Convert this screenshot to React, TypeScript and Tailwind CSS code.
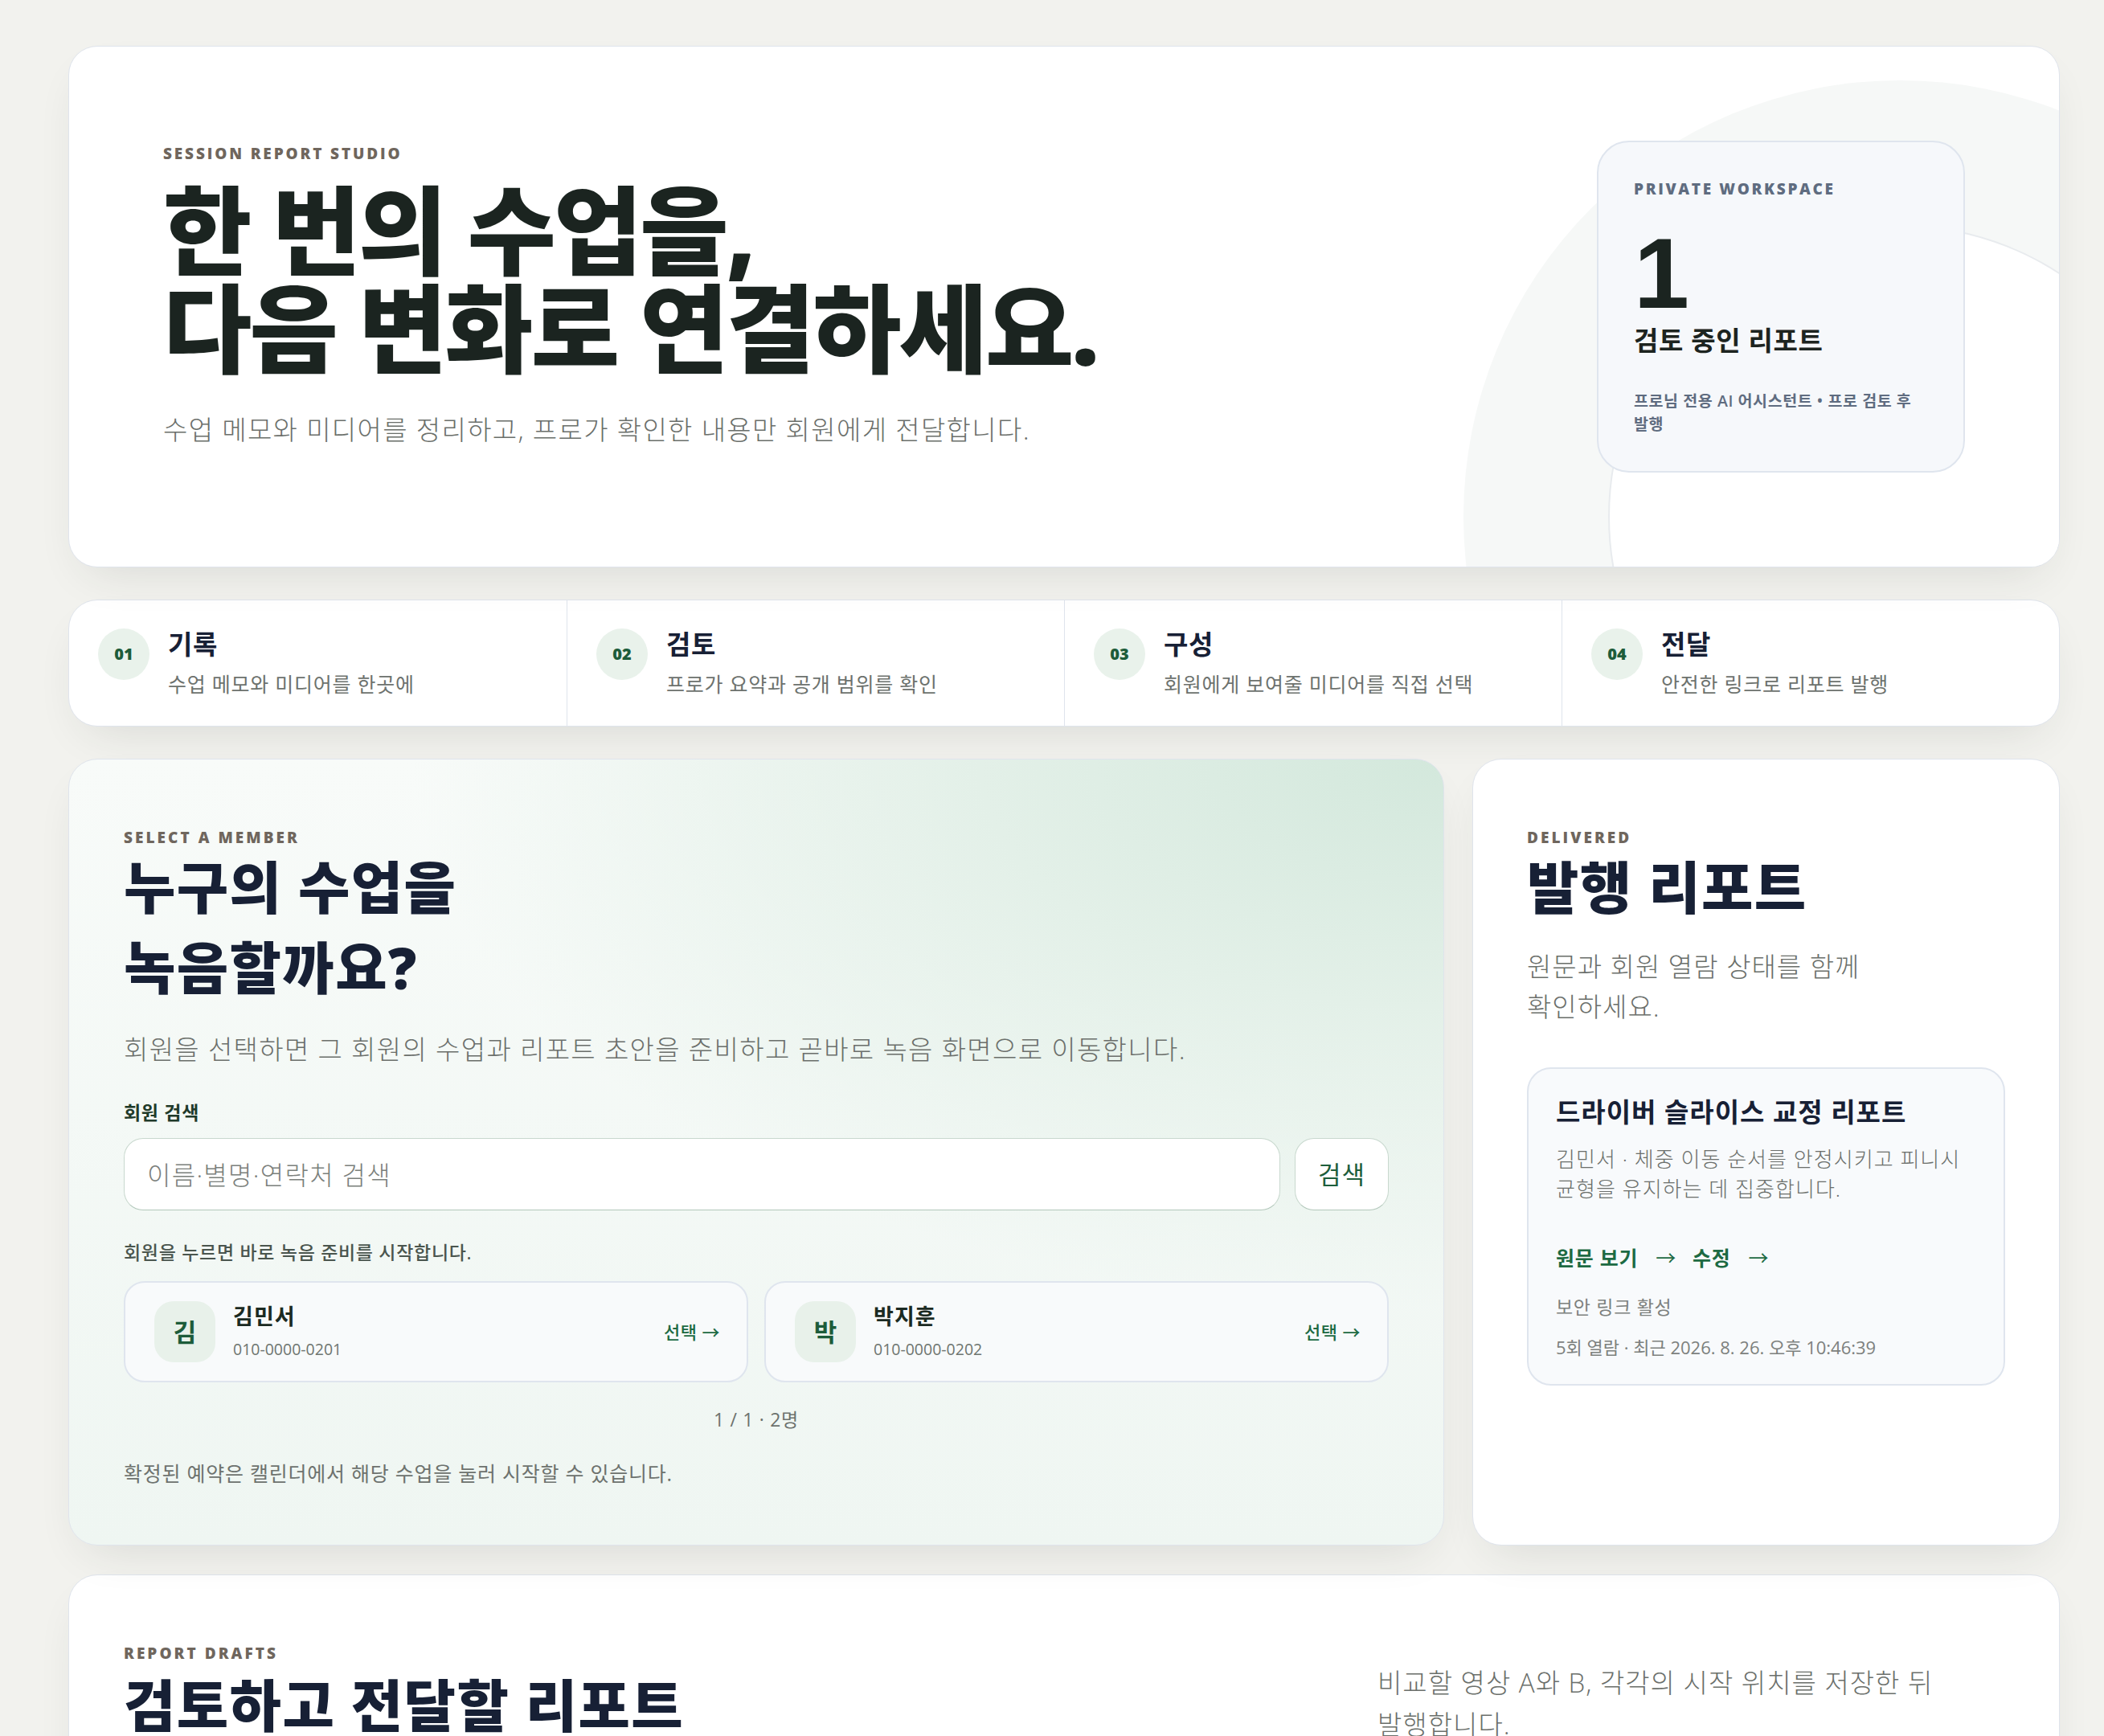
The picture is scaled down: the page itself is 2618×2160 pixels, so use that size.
import { type ReactNode } from 'react'

const steps = [
  { n: '01', title: '기록', desc: '수업 메모와 미디어를 한곳에' },
  { n: '02', title: '검토', desc: '프로가 요약과 공개 범위를 확인' },
  { n: '03', title: '구성', desc: '회원에게 보여줄 미디어를 직접 선택' },
  { n: '04', title: '전달', desc: '안전한 링크로 리포트 발행' },
]

const members = [
  { initial: '김', name: '김민서', phone: '010-0000-0201' },
  { initial: '박', name: '박지훈', phone: '010-0000-0202' },
]

function Eyebrow({ children, className = '' }: { children: ReactNode; className?: string }): JSX.Element {
  return (
    <p className={`text-[19px] font-extrabold uppercase leading-[24px] tracking-[0.16em] text-[#6f665d] ${className}`}>
      {children}
    </p>
  )
}

const card = 'rounded-[36px] border border-[#dfe4ec] shadow-[0_24px_60px_-24px_rgba(40,52,45,0.14)]'

export default function App(): JSX.Element {
  return (
    <div className="min-h-screen break-keep bg-[#f2f2ee] pl-[85px] pr-[55px] pt-[57px] font-['Open_Sans','Noto_Sans_CJK_KR',sans-serif] text-[#172035]">
      {/* 상단 히어로 */}
      <section className={`relative overflow-hidden bg-white ${card}`}>
        <div className="pointer-events-none absolute left-[1735px] top-[42px] h-[1086px] w-[1086px] rounded-full bg-[#f6f8f7]" />
        <div className="pointer-events-none absolute left-[1915px] top-[222px] h-[726px] w-[726px] rounded-full border-2 border-[#e8ebee] bg-white" />
        <div className="relative flex items-center justify-between px-[117px] py-[117px]">
          <div className="pb-[28px]">
            <p className="text-[19px] font-extrabold uppercase leading-[28px] tracking-[0.15em] text-[#6f665d]">
              Session Report Studio
            </p>
            <h1 className="mt-[21px] text-[120px] font-black leading-[122px] tracking-[-0.025em] text-[#1b2420]">
              한 번의 수업을,
              <br />
              다음 변화로 연결하세요.
            </h1>
            <p className="mt-[41px] text-[33px] font-light leading-[48px] tracking-[0.04em] text-[#6b6f6b]">
              수업 메모와 미디어를 정리하고, 프로가 확인한 내용만 회원에게 전달합니다.
            </p>
          </div>

          <div className="w-[458px] rounded-[40px] border-2 border-[#dfe5ee] bg-[#f6f8fb] px-[44px] pb-[44px] pt-[44px]">
            <p className="text-[19px] font-extrabold uppercase leading-[28px] tracking-[0.14em] text-[#5f6c80]">
              Private Workspace
            </p>
            <p className="mt-[29px] font-['Liberation_Sans',Arial,sans-serif] text-[124px] font-bold leading-none text-[#1b2420]">
              1
            </p>
            <p className="text-[33px] font-bold leading-[44px] tracking-[0.02em] text-[#1d2420]">검토 중인 리포트</p>
            <p className="mt-[38px] text-[19.5px] font-semibold leading-[29px] tracking-[0.03em] text-[#5f6c80]">
              프로님 전용 AI 어시스턴트 • 프로 검토 후 발행
            </p>
          </div>
        </div>
      </section>

      {/* 진행 단계 */}
      <section className={`mt-[40px] grid grid-cols-4 overflow-hidden bg-white ${card} rounded-[30px]`}>
        {steps.map((s, i) => (
          <div
            key={s.n}
            className={`flex items-start gap-[23px] px-[36px] pb-[35px] pt-[35px] ${i > 0 ? 'border-l border-[#dfe4ec]' : ''}`}
          >
            <span className="flex h-[64px] w-[64px] shrink-0 items-center justify-center rounded-full bg-[#e9f2eb] text-[20px] font-extrabold text-[#1d5c3a]">
              {s.n}
            </span>
            <div>
              <p className="text-[33px] font-bold leading-[40px] tracking-[0.02em] text-[#172035]">{s.title}</p>
              <p className="mt-[12px] text-[25px] leading-[34px] tracking-[0.03em] text-[#6d726e]">{s.desc}</p>
            </div>
          </div>
        ))}
      </section>

      {/* 회원 선택 + 발행 리포트 */}
      <div className="mt-[40px] grid grid-cols-[minmax(0,1fr)_731px] gap-[35px]">
        <section
          className={`${card} bg-[radial-gradient(ellipse_75%_70%_at_100%_0%,#d3e8dc_0%,#e3f0e8_45%,rgba(238,246,241,0)_100%),linear-gradient(180deg,#f8fbf9_0%,#eff6f2_100%)] px-[68px] pb-[72px] pt-[85px]`}
        >
          <Eyebrow>Select a member</Eyebrow>
          <h2 className="text-[70px] font-black leading-[100px] tracking-[0.02em] text-[#172035]">
            누구의 수업을
            <br />
            녹음할까요?
          </h2>
          <p className="mt-[28px] text-[33px] font-light leading-[48px] tracking-[0.04em] text-[#6b6f6b]">
            회원을 선택하면 그 회원의 수업과 리포트 초안을 준비하고 곧바로 녹음 화면으로 이동합니다.
          </p>

          <label className="mt-[39px] block text-[23px] font-bold leading-[30px] tracking-[0.03em] text-[#1f3a2a]">
            회원 검색
          </label>
          <div className="mt-[17px] flex gap-[18px]">
            <input
              placeholder="이름·별명·연락처 검색"
              className="h-[90px] min-w-0 flex-1 rounded-[24px] border border-[#c8d8ce] border-b-[#b2c7ba] bg-white px-[28px] text-[32px] font-light tracking-[0.04em] text-[#172035] outline-none placeholder:text-[#7b807c]"
            />
            <button
              type="button"
              className="h-[90px] w-[117px] rounded-[24px] border border-[#c8d8ce] border-b-[#b2c7ba] bg-white text-[31px] tracking-[0.03em] text-[#1d5e3c]"
            >
              검색
            </button>
          </div>

          <p className="mt-[37px] text-[23px] font-medium leading-[30px] tracking-[0.03em] text-[#4a554e]">
            회원을 누르면 바로 녹음 준비를 시작합니다.
          </p>

          <div className="mt-[21px] grid grid-cols-2 gap-[20px]">
            {members.map((m) => (
              <div
                key={m.name}
                className="flex items-center rounded-[26px] border-2 border-[#dfe5ee] bg-[#f8fafb] py-[23px] pl-[36px] pr-[33px]"
              >
                <span className="flex h-[76px] w-[76px] shrink-0 items-center justify-center rounded-[24px] bg-[#e8f1ea] text-[31px] font-bold text-[#1d5c3a]">
                  {m.initial}
                </span>
                <div className="ml-[22px] flex-1">
                  <p className="text-[27px] font-bold leading-[34px] tracking-[0.04em] text-[#1b2a22]">{m.name}</p>
                  <p className="mt-[10px] text-[19.5px] leading-[28px] text-[#6e7570]">{m.phone}</p>
                </div>
                <span className="text-[22px] font-medium tracking-[0.02em] text-[#1d6a43]">선택 →</span>
              </div>
            ))}
          </div>

          <p className="mt-[31px] text-center text-[23px] leading-[30px] tracking-[0.03em] text-[#6d726e]">1 / 1 · 2명</p>
          <p className="mt-[35px] text-[25px] leading-[34px] tracking-[0.03em] text-[#6d726e]">
            확정된 예약은 캘린더에서 해당 수업을 눌러 시작할 수 있습니다.
          </p>
        </section>

        <section className={`${card} bg-white px-[67px] pb-[72px] pt-[85px]`}>
          <Eyebrow>Delivered</Eyebrow>
          <h2 className="text-[70px] font-black leading-[100px] tracking-[0.02em] text-[#172035]">발행 리포트</h2>
          <p className="mt-[24px] max-w-[500px] text-[33px] font-light leading-[50px] tracking-[0.03em] text-[#6b6f6b]">
            원문과 회원 열람 상태를 함께 확인하세요.
          </p>

          <article className="mt-[50px] rounded-[30px] border-2 border-[#dfe5ee] bg-[#f8fafc] px-[34px] pb-[31px] pt-[33px]">
            <h3 className="text-[33px] font-bold leading-[42px] tracking-[0.03em] text-[#172035]">
              드라이버 슬라이스 교정 리포트
            </h3>
            <p className="mt-[19px] text-[26px] font-light leading-[37px] tracking-[0.04em] text-[#6b6f6b]">
              김민서 · 체중 이동 순서를 안정시키고 피니시 균형을 유지하는 데 집중합니다.
            </p>
            <div className="mt-[50px] flex items-center gap-[20px] text-[25px] font-bold leading-[34px] tracking-[0.03em] text-[#1d6a43]">
              <span className="flex items-center gap-[22px]">
                원문 보기 <span className="font-normal">→</span>
              </span>
              <span className="flex items-center gap-[22px]">
                수정 <span className="font-normal">→</span>
              </span>
            </div>
            <p className="mt-[29px] text-[23px] leading-[30px] tracking-[0.03em] text-[#7d817e]">보안 링크 활성</p>
            <p className="mt-[20px] text-[22px] leading-[30px] text-[#7d817e]">5회 열람 · 최근 2026. 8. 26. 오후 10:46:39</p>
          </article>
        </section>
      </div>

      {/* 리포트 초안 */}
      <section className={`mt-[36px] bg-white ${card} px-[68px] pb-[80px] pt-[85px]`}>
        <div className="flex items-end justify-between">
          <div>
            <Eyebrow>Report drafts</Eyebrow>
            <h2 className="mt-[3px] text-[70px] font-black leading-[100px] tracking-[0.02em] text-[#172035]">
              검토하고 전달할 리포트
            </h2>
          </div>
          <p className="w-[780px] text-[33px] font-light leading-[52px] tracking-[0.03em] text-[#6b6f6b]">
            비교할 영상 A와 B, 각각의 시작 위치를 저장한 뒤 발행합니다.
          </p>
        </div>
        <div className="h-[400px]" />
      </section>
    </div>
  )
}
